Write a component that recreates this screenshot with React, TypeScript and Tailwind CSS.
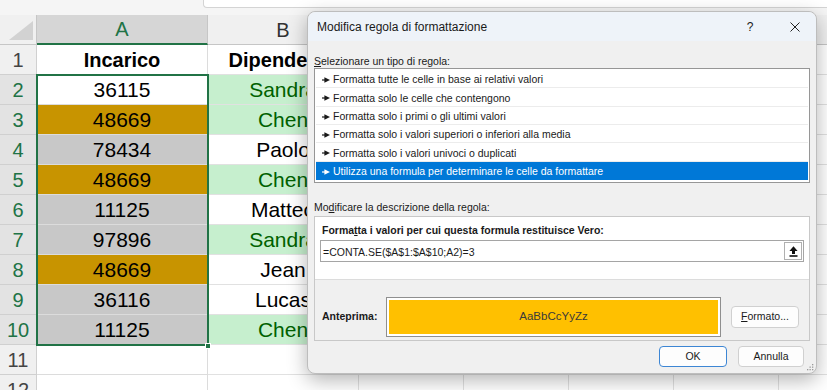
import React from 'react';

type Row = {
  n: number;
  a?: string;
  b?: string;
  aCls: string;
  bCls: string;
  bold?: boolean;
  sel?: boolean;
};

const GOLD = 'bg-[#c89400] text-black';
const GRAY = 'bg-[#c8c8c8] text-black';
const WHITE = 'bg-white text-black';
const GREEN = 'bg-[#c6efce] text-[#006100]';

const rows: Row[] = [
  { n: 1, a: 'Incarico', b: 'Dipendente', aCls: WHITE, bCls: WHITE, bold: true },
  { n: 2, a: '36115', b: 'Sandra', aCls: WHITE, bCls: GREEN, sel: true },
  { n: 3, a: '48669', b: 'Chen', aCls: GOLD, bCls: GREEN, sel: true },
  { n: 4, a: '78434', b: 'Paolo', aCls: GRAY, bCls: WHITE, sel: true },
  { n: 5, a: '48669', b: 'Chen', aCls: GOLD, bCls: GREEN, sel: true },
  { n: 6, a: '11125', b: 'Matteo', aCls: GRAY, bCls: WHITE, sel: true },
  { n: 7, a: '97896', b: 'Sandra', aCls: GRAY, bCls: GREEN, sel: true },
  { n: 8, a: '48669', b: 'Jean', aCls: GOLD, bCls: WHITE, sel: true },
  { n: 9, a: '36116', b: 'Lucas', aCls: GRAY, bCls: WHITE, sel: true },
  { n: 10, a: '11125', b: 'Chen', aCls: GRAY, bCls: GREEN, sel: true },
  { n: 11, aCls: WHITE, bCls: WHITE },
  { n: 12, aCls: WHITE, bCls: WHITE },
];

const ruleTypes = [
  'Formatta tutte le celle in base ai relativi valori',
  'Formatta solo le celle che contengono',
  'Formatta solo i primi o gli ultimi valori',
  'Formatta solo i valori superiori o inferiori alla media',
  'Formatta solo i valori univoci o duplicati',
  'Utilizza una formula per determinare le celle da formattare',
];

function Pointer({ white }: { white?: boolean }) {
  const c = white ? '#ffffff' : '#1a1a1a';
  return (
    <svg width="8" height="6" viewBox="0 0 8 6" className="shrink-0">
      <path d="M0 3h3" stroke={c} strokeWidth="1.2" />
      <path d="M2.4 0.2L8 3L2.4 5.8Z" fill={c} />
    </svg>
  );
}

function Sheet() {
  const extraCols = [0, 1, 2, 3, 4];
  return (
    <div className="flex flex-col">
      {/* top band with formula bar edge */}
      <div className="flex h-[15px] bg-[#f5f5f5]">
        <div className="w-[203px] shrink-0" />
        <div className="h-[8px] flex-1 rounded-bl-[4px] border-b border-l border-[#d4d4d4] bg-white" />
      </div>
      {/* column headers */}
      <div className="flex h-[30px] bg-[#f0f0f0]">
        <div className="relative w-[37px] shrink-0 border-b border-r border-[#c6c6c6]">
          <svg width="37" height="30" viewBox="0 0 37 30" className="absolute left-0 top-0">
            <path d="M33 6L33 25L9 25Z" fill="#d2d2d2" />
          </svg>
        </div>
        <div className="flex w-[171px] shrink-0 items-center justify-center border-b-2 border-r border-b-[#217346] border-r-[#c6c6c6] bg-[#d6d6d6] text-[20px] text-[#217346]">
          A
        </div>
        <div className="flex w-[151px] shrink-0 items-center justify-center border-b border-r border-[#c6c6c6] text-[20px] text-[#333333]">
          B
        </div>
        {extraCols.map((c) => (
          <div key={c} className="w-[105px] shrink-0 border-b border-r border-[#c6c6c6]" />
        ))}
      </div>
      {rows.map((r) => (
        <div key={r.n} className="flex h-[30px]">
          <div
            className={
              r.sel
                ? 'flex w-[37px] shrink-0 items-center justify-center border-b border-r border-b-[#d0d0d0] border-r-[#217346] bg-[#e3e3e3] text-[20px] text-[#217346]'
                : 'flex w-[37px] shrink-0 items-center justify-center border-b border-r border-[#d0d0d0] bg-[#f0f0f0] text-[20px] text-[#444444]'
            }
          >
            {r.n}
          </div>
          <div
            className={
              'flex w-[171px] shrink-0 items-center justify-center border-b border-r border-[#dcdcdc] ' +
              r.aCls +
              (r.bold ? ' text-[20px] font-bold' : ' text-[21px]')
            }
          >
            {r.a}
          </div>
          <div
            className={
              'flex w-[151px] shrink-0 items-center justify-center whitespace-nowrap border-b border-r border-[#e1e1e1] ' +
              r.bCls +
              (r.bold ? ' text-[20px] font-bold' : ' text-[21px]')
            }
          >
            {r.b}
          </div>
          {extraCols.map((c) => (
            <div key={c} className="w-[105px] shrink-0 border-b border-r border-[#e1e1e1] bg-white" />
          ))}
        </div>
      ))}
    </div>
  );
}

function Dialog() {
  return (
    <div className="absolute left-[307px] top-[11px] flex h-[363px] w-[510px] flex-col rounded-[8px] border border-[#bdbdbd] bg-[#f0f0f0] text-[#1a1a1a] shadow-[0_6px_20px_rgba(0,0,0,0.3)]">
      {/* title bar */}
      <div className="flex h-[29px] shrink-0 items-center rounded-t-[8px] bg-[#eef3f9] pl-[9px]">
        <span className="text-[12px]">Modifica regola di formattazione</span>
        <div className="flex-1" />
        <span className="w-[12px] text-center text-[12px]">?</span>
        <div className="w-[34px]" />
        <svg width="10" height="10" viewBox="0 0 10 10">
          <path d="M0.5 0.5L9.5 9.5M9.5 0.5L0.5 9.5" stroke="#222" strokeWidth="1" />
        </svg>
        <div className="w-[16px]" />
      </div>
      {/* body */}
      <div className="flex flex-1 flex-col px-[6px] pt-[13px]">
        <div className="h-[14px] text-[10.5px] leading-[14px]">
          <span className="underline">S</span>elezionare un tipo di regola:
        </div>
        <div className="flex h-[115px] flex-col border border-[#969696] bg-white px-[1px] pt-[1px]">
          {ruleTypes.map((t, i) =>
            i === ruleTypes.length - 1 ? (
              <div
                key={t}
                className="flex h-[18.33px] shrink-0 items-center gap-[3px] bg-[#0078d7] pl-[6px] pt-[3px] text-[10.5px] text-white"
              >
                <Pointer white />
                <span>{t}</span>
              </div>
            ) : (
              <div
                key={t}
                className="flex h-[18.33px] shrink-0 items-center gap-[3px] border-b border-[#ececec] pl-[6px] pt-[3px] text-[10.5px]"
              >
                <Pointer />
                <span>{t}</span>
              </div>
            )
          )}
        </div>
        <div className="mt-[17px] h-[14px] text-[10.5px] leading-[14px]">
          Mo<span className="underline">d</span>ificare la descrizione della regola:
        </div>
        <div className="mt-[2px] flex h-[125px] flex-col border border-[#c8c8c8]">
          <div className="flex h-[62px] flex-col bg-white">
            <div className="mt-[6px] h-[14px] pl-[7px] text-[10.5px] font-bold leading-[14px]">
              Forma<span className="underline">t</span>ta i valori per cui questa formula restituisce Vero:
            </div>
            <div className="mx-[5px] mt-[3px] flex h-[22px] items-center border border-[#a5a5a5] bg-white pl-[2px] pr-[1px]">
              <span className="flex-1 pt-[3px] text-[10.5px]">=CONTA.SE($A$1:$A$10;A2)=3</span>
              <div className="flex h-[18px] w-[18px] items-center justify-center border border-[#b0b0b0] bg-white">
                <svg width="9" height="11" viewBox="0 0 9 11">
                  <path d="M4.5 0.3L8.6 5H6V8H3V5H0.4Z" fill="#111" />
                  <rect x="0.5" y="9.2" width="8" height="1.6" fill="#111" />
                </svg>
              </div>
            </div>
          </div>
          <div className="h-px bg-[#dcdcdc]" />
          <div className="flex flex-1 flex-col pl-[7px] pt-[17px]">
            <div className="flex h-[40px] items-center">
              <span className="w-[64px] text-[10.5px] font-bold">Anteprima:</span>
              <div className="flex h-[40px] w-[335px] border border-[#8f8f8f] bg-white p-[2px]">
                <div className="flex flex-1 items-center justify-center bg-[#ffc000] text-[11.5px] text-[#3a3a3a]">
                  AaBbCcYyZz
                </div>
              </div>
              <div className="ml-[10px] flex h-[22px] w-[68px] items-center justify-center rounded-[4px] border border-[#d0d0d0] bg-[#fdfdfd] text-[10.5px]">
                <span>
                  <span className="underline">F</span>ormato...
                </span>
              </div>
            </div>
          </div>
        </div>
        <div className="mr-[6px] mt-[5px] flex h-[21px] justify-end gap-[11px]">
          <div className="flex w-[68px] items-center justify-center rounded-[4px] border border-[#3d86d4] bg-[#fdfdfd] text-[10.5px]">
            OK
          </div>
          <div className="flex w-[66px] items-center justify-center rounded-[4px] border border-[#d0d0d0] bg-[#fdfdfd] text-[10.5px]">
            Annulla
          </div>
        </div>
      </div>
      <svg width="7" height="7" viewBox="0 0 7 7" className="absolute bottom-[2px] right-[2px]">
        <rect x="5" y="0" width="1.3" height="1.3" fill="#9a9a9a" />
        <rect x="2.5" y="2.5" width="1.3" height="1.3" fill="#9a9a9a" />
        <rect x="5" y="2.5" width="1.3" height="1.3" fill="#9a9a9a" />
        <rect x="0" y="5" width="1.3" height="1.3" fill="#9a9a9a" />
        <rect x="2.5" y="5" width="1.3" height="1.3" fill="#9a9a9a" />
        <rect x="5" y="5" width="1.3" height="1.3" fill="#9a9a9a" />
      </svg>
    </div>
  );
}

export default function App() {
  return (
    <div className="relative h-[390px] w-[827px] overflow-hidden bg-white font-['Liberation_Sans',Arial,sans-serif]">
      <Sheet />
      {/* selection rectangle over A2:A10 */}
      <div className="pointer-events-none absolute left-[36px] top-[74px] h-[272px] w-[173px] border-2 border-[#217346]" />
      <div className="absolute left-[205px] top-[343px] h-[6px] w-[6px] border border-white bg-[#217346]" />
      <Dialog />
    </div>
  );
}
